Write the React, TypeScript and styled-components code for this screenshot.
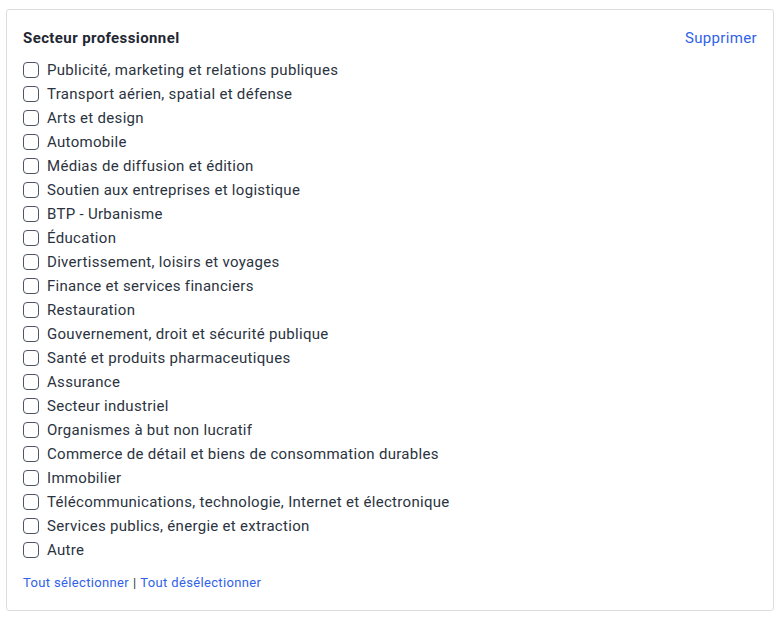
import styled, { createGlobalStyle } from "styled-components";

const sectors = [
    "Publicité, marketing et relations publiques",
    "Transport aérien, spatial et défense",
    "Arts et design",
    "Automobile",
    "Médias de diffusion et édition",
    "Soutien aux entreprises et logistique",
    "BTP - Urbanisme",
    "Éducation",
    "Divertissement, loisirs et voyages",
    "Finance et services financiers",
    "Restauration",
    "Gouvernement, droit et sécurité publique",
    "Santé et produits pharmaceutiques",
    "Assurance",
    "Secteur industriel",
    "Organismes à but non lucratif",
    "Commerce de détail et biens de consommation durables",
    "Immobilier",
    "Télécommunications, technologie, Internet et électronique",
    "Services publics, énergie et extraction",
    "Autre",
];

const GlobalStyle = createGlobalStyle`
    body {
        margin: 0;
        background: #fff;
        font-family: "Roboto", "Open Sans", sans-serif;
        color: #2b3340;
    }
`

export default function App() {
    return (
        <>
            <GlobalStyle />
            <Card>
                <Header>
                    <Title>Secteur professionnel</Title>
                    <Link $size={15}>Supprimer</Link>
                </Header>
                <List>
                    {sectors.map((s) => (
                        <Row key={s}>
                            <Box type="checkbox" />
                            <span>{s}</span>
                        </Row>
                    ))}
                </List>
                <Footer>
                    <Link $size={13}>Tout sélectionner</Link>
                    <Sep>|</Sep>
                    <Link $size={13}>Tout désélectionner</Link>
                </Footer>
            </Card>
        </>
    );
}

const Card = styled.div`
    margin: 9px 8px 0 6px;
    border: 1px solid #dcdde0;
    border-radius: 3px;
    padding: 18px 16px 20px 16px;
`

const Header = styled.div`
    display: flex;
    justify-content: space-between;
    align-items: center;
    height: 20px;
`

const Title = styled.h2`
    margin: 0;
    font-size: 15px;
    font-weight: 700;
    letter-spacing: 0.4px;
    color: #1f2733;
`

const Link = styled.a<{ $size: number }>`
    font-size: ${(p) => p.$size}px;
    letter-spacing: 0.35px;
    color: #2f62e8;
    cursor: pointer;
`

const List = styled.div`
    display: flex;
    flex-direction: column;
    margin-top: 10px;
`

const Row = styled.label`
    display: flex;
    align-items: center;
    gap: 8px;
    height: 24px;
    font-size: 15px;
    letter-spacing: 0.3px;
    color: #2b3340;
`

const Box = styled.input`
    appearance: none;
    margin: 0;
    width: 16px;
    height: 16px;
    border: 1px solid #4d5562;
    border-radius: 4px;
    background: #fff;
`

const Footer = styled.div`
    display: flex;
    align-items: center;
    gap: 4px;
    margin-top: 12px;
    height: 16px;
    font-size: 13px;
`

const Sep = styled.span`
    color: #2b3340;
`
